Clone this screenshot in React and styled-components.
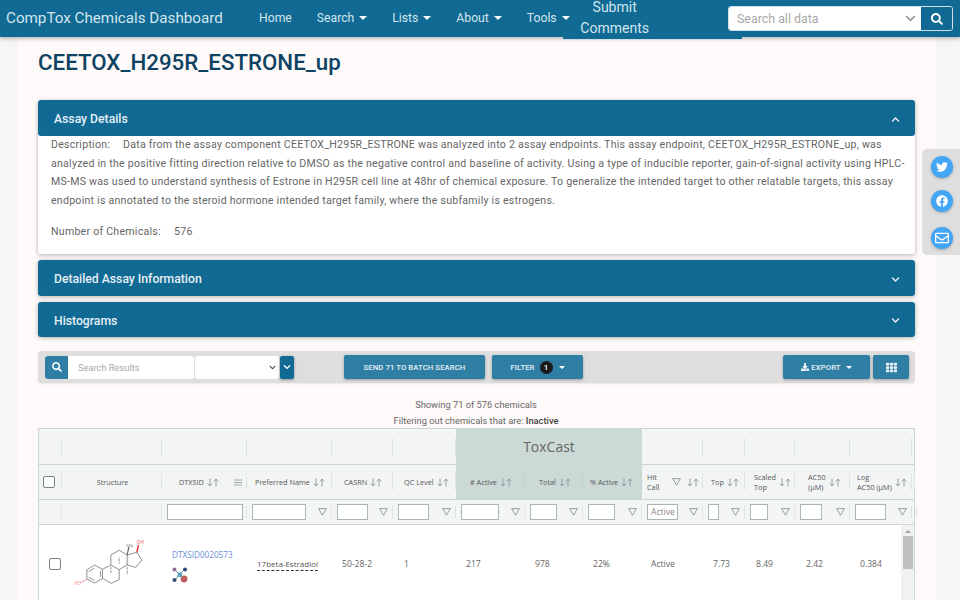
import React from "react";
import styled, { createGlobalStyle } from "styled-components";
import {
  FaSearch,
  FaChevronDown,
  FaChevronUp,
  FaTwitter,
  FaFacebook,
  FaRegEnvelope,
  FaDownload,
  FaTh,
} from "react-icons/fa";

const GlobalStyle = createGlobalStyle`
  html, body {
    margin: 0;
    height: 600px;
    overflow: hidden;
    background: #f5f6f6;
    font-family: Roboto, "Liberation Sans", sans-serif;
  }
  * { box-sizing: border-box; }
`;

const COLUMNS = "23px 100px 85px 85px 61px 63px 69px 58px 59px 61px 42px 50px 55px 62px 1fr";
const BODY_COLUMNS = "23px 100px 85px 85px 61px 63px 69px 58px 59px 61px 42px 50px 55px 1fr";

const Page = styled.div`
  position: relative;
  width: 960px;
  height: 600px;
  overflow: hidden;
`;

const Navbar = styled.header`
  position: relative;
  z-index: 2;
  display: flex;
  align-items: flex-start;
  height: 37px;
  padding: 0 7px 0 6px;
  background: #106a94;
  box-shadow: 0 2px 4px rgba(0, 0, 0, 0.25);
  color: #d3e5ed;
`;

const Brand = styled.div`
  flex: none;
  width: 253px;
  font-size: 15.2px;
  line-height: 37px;
  white-space: nowrap;
`;

const NavLink = styled.div`
  position: relative;
  z-index: 1;
  flex: none;
  display: flex;
  align-items: center;
  gap: 5px;
  margin-right: 25px;
  height: 36px;
  font-size: 12.2px;
  white-space: nowrap;
`;

const Caret = styled.span`
  display: inline-block;
  width: 0;
  height: 0;
  border-left: ${(p) => p.$size || 4}px solid transparent;
  border-right: ${(p) => p.$size || 4}px solid transparent;
  border-top: ${(p) => p.$size || 4}px solid ${(p) => p.$color || "#fff"};
  margin-left: ${(p) => p.$gap || 0}px;
`;

const CommentsBox = styled.div`
  flex: none;
  width: 179px;
  height: 40px;
  margin-left: -32px;
  margin-right: -14px;
  padding-left: 17px;
  background: #106a94;
  border-bottom: 1px solid #cfe0e8;
  font-size: 14px;
`;

const CommentsText = styled.div`
  width: 70px;
  margin-top: -3px;
  text-align: center;
  line-height: 21px;
`;

const SiteSearch = styled.div`
  position: relative;
  display: flex;
  flex: none;
  width: 225px;
  height: 25px;
  margin-top: 6px;
  margin-left: auto;
  border: 1px solid #cfe0e8;
  border-radius: 3px;
  overflow: hidden;
`;

const SiteField = styled.div`
  flex: 1;
  display: flex;
  align-items: center;
  justify-content: space-between;
  padding: 0 5px 0 8px;
  background: #fff;
  color: #a9a9a9;
  font-size: 12.4px;
`;

const SiteButton = styled.div`
  flex: none;
  display: flex;
  align-items: center;
  justify-content: center;
  width: 31px;
  background: #106a94;
  color: #fff;
  font-size: 12px;
`;

const Main = styled.main`
  width: 919px;
  height: 563px;
  margin-left: 17px;
  padding: 0 21px;
  background: #fffafa;
`;

const Title = styled.h1`
  margin: 0;
  height: 63px;
  padding-top: 10px;
  font-size: 22.3px;
  line-height: 30px;
  font-weight: 500;
  color: #0d4263;
`;

const Panel = styled.section`
  margin-bottom: 6px;
  background: #fff;
  border-radius: 3px;
  box-shadow: 0 1px 4px rgba(0, 0, 0, 0.3);
`;

const PanelHead = styled.div`
  display: flex;
  align-items: center;
  justify-content: space-between;
  height: ${(p) => p.$height}px;
  padding: 2px 15px 0 16px;
  background: #106a94;
  border-radius: 3px;
  color: #e6eff4;
  font-size: 12.2px;
  font-weight: 500;
`;

const PanelBody = styled.div`
  height: 118px;
  padding: 0 6px 0 13px;
  color: #666;
  font-size: 10.6px;
  line-height: 18.7px;
  letter-spacing: 0.24px;
`;

const Description = styled.p`
  margin: 0;
`;

const Label = styled.span`
  display: inline-block;
  width: 72px;
`;

const ChemCount = styled.div`
  margin-top: 12px;
`;

const CountLabel = styled.span`
  display: inline-block;
  width: 123px;
`;

const Toolbar = styled.div`
  display: flex;
  align-items: center;
  height: 32px;
  margin-top: 14px;
  padding: 0 6px 0 7px;
  background: #dedede;
  border-radius: 4px;
  box-shadow: 0 1px 2px rgba(0, 0, 0, 0.08);
`;

const SearchIcon = styled.div`
  display: flex;
  align-items: center;
  justify-content: center;
  width: 23px;
  height: 23px;
  background: #2f7fa5;
  border-radius: 3px 0 0 3px;
  color: #fff;
  font-size: 10px;
`;

const ResultSearch = styled.div`
  width: 126px;
  height: 23px;
  padding-left: 10px;
  background: #fff;
  border-radius: 0 3px 3px 0;
  color: #a9a9a9;
  font-size: 9.3px;
  line-height: 23px;
`;

const ResultSelect = styled.div`
  display: flex;
  align-items: center;
  justify-content: flex-end;
  width: 84px;
  height: 23px;
  margin-left: 1px;
  padding-right: 3px;
  background: #fff;
  border-radius: 3px;
  color: #444;
  font-size: 7px;
`;

const SelectButton = styled.div`
  display: flex;
  align-items: center;
  justify-content: center;
  width: 14px;
  height: 23px;
  margin-left: 1px;
  background: #106a94;
  border-radius: 2px;
  color: #fff;
  font-size: 8px;
  box-shadow: 0 1px 3px rgba(0, 0, 0, 0.35);
`;

const ActionButton = styled.div`
  display: flex;
  align-items: center;
  justify-content: center;
  gap: ${(p) => p.$gap || 0}px;
  flex: none;
  width: ${(p) => p.$width}px;
  height: 24px;
  margin-left: ${(p) => p.$left}px;
  background: #2f7fa5;
  border-radius: 2px;
  color: #e8f1f5;
  font-size: 7.7px;
  font-weight: 500;
  letter-spacing: 0.1px;
  box-shadow: 0 1px 3px rgba(0, 0, 0, 0.3);
  white-space: nowrap;
`;

const Badge = styled.span`
  display: flex;
  align-items: center;
  justify-content: center;
  width: 13px;
  height: 13px;
  margin: 0 6px 0 5px;
  background: #1b1b1b;
  border-radius: 50%;
  color: #fff;
  font-size: 8px;
`;

const Summary = styled.div`
  margin-top: 14px;
  padding-right: 1px;
  text-align: center;
  color: #666;
  font-size: 9.3px;
  line-height: 16px;

  b {
    color: #444;
    font-weight: 500;
  }
`;

const Table = styled.div`
  height: 180px;
  margin-top: -1px;
  border: 1px solid #cdd6d6;
  border-bottom: none;
  background: #fff;
  font-family: "Open Sans", "Noto Sans", sans-serif;
`;

const HeadRow = styled.div`
  display: grid;
  grid-template-columns: ${COLUMNS};
  height: ${(p) => p.$height}px;
  background: #f3f5f5;
  border-bottom: 1px solid #cdd6d6;
`;

const GroupCell = styled.div`
  display: flex;
  align-items: center;
  justify-content: center;
  grid-column: ${(p) => (p.$span ? `span ${p.$span}` : "auto")};
  background: ${(p) => (p.$shaded ? "#cbdad7" : "transparent")};
  color: #666;
  font-size: 14px;
  font-weight: 500;

  &::after {
    content: "";
    display: ${(p) => (p.$shaded ? "none" : "block")};
    width: 1px;
    height: 18px;
    margin-left: auto;
    background: #dfe4e4;
  }
`;

const HeadCell = styled.div`
  display: flex;
  align-items: center;
  justify-content: ${(p) => p.$justify || "flex-start"};
  gap: 3px;
  padding: 0 3px 0 ${(p) => p.$pad ?? 4}px;
  background: ${(p) => (p.$shaded ? "#cbdad7" : "transparent")};
  color: #555;
  font-size: 7.3px;
  line-height: 10.5px;
  position: relative;

  &::after {
    content: "";
    position: absolute;
    right: 0;
    top: 8px;
    bottom: 9px;
    width: 1px;
    background: ${(p) => (p.$shaded ? "#c2d2cf" : "#dfe4e4")};
  }
`;

const HeadLabel = styled.span`
  white-space: pre-line;
`;

const HeadIcon = styled.span`
  display: flex;
  margin-left: ${(p) => p.$left || "0"};
  margin-right: ${(p) => p.$right || 0}px;
`;

const FilterCell = styled.div`
  display: flex;
  align-items: center;
  padding: 0 0 0 5px;
  position: relative;

  &::after {
    content: "";
    position: absolute;
    right: 0;
    top: 6px;
    bottom: 6px;
    width: 1px;
    background: #dfe4e4;
  }
`;

const FilterInput = styled.input`
  flex: none;
  width: ${(p) => p.$width}px;
  height: 16px;
  padding: 0 0 0 3px;
  background: #fff;
  border: 1px solid #aab6b6;
  border-radius: 0;
  outline: none;
  font-family: inherit;
  font-size: 8.6px;

  &::placeholder {
    color: #888;
  }
`;

const FilterSlot = styled.div`
  flex: 1;
  display: flex;
  justify-content: flex-end;
  padding-right: 5px;
`;

const Checkbox = styled.span`
  display: block;
  width: 12px;
  height: 12px;
  margin-left: ${(p) => p.$left}px;
  background: #fff;
  border: 1px solid #76838b;
  border-radius: 2px;
`;

const TableBody = styled.div`
  display: flex;
  height: 100px;
`;

const BodyRow = styled.div`
  flex: 1;
  display: grid;
  grid-template-columns: ${BODY_COLUMNS};
  height: 77px;
  align-items: center;
  color: #666;
  font-size: 8.6px;
`;

const BodyCell = styled.div`
  padding-left: ${(p) => p.$pad ?? 10}px;
`;

const StructureCell = styled.div`
  margin-left: 8px;
  line-height: 0;
`;

const IdentityCell = styled.div`
  margin-top: 4px;
`;

const Link = styled.div`
  padding-left: 10px;
  color: #6d8fdc;
  font-size: 8.2px;
`;

const LinkIcon = styled.div`
  margin: 7px 0 0 10px;
  line-height: 0;
`;

const Dashed = styled.span`
  color: #555;
  font-size: 8px;
  border-bottom: 1px dashed #333;
  padding-bottom: 1px;
`;

const Scrollbar = styled.div`
  flex: none;
  display: flex;
  flex-direction: column;
  align-items: center;
  width: 13px;
  height: 76px;
  background: #f1f1f1;
`;

const ScrollUp = styled.span`
  margin: 5px 0 3px;
  width: 0;
  height: 0;
  border-left: 3px solid transparent;
  border-right: 3px solid transparent;
  border-bottom: 3px solid #a3a3a3;
`;

const ScrollThumb = styled.span`
  width: 10px;
  height: 33px;
  background: #c1c1c1;
`;

const SideRail = styled.aside`
  position: absolute;
  top: 149px;
  right: 0;
  display: flex;
  flex-direction: column;
  align-items: center;
  width: 38px;
  height: 106px;
  padding: 7px 0 0 1px;
  background: #dedede;
  border-radius: 5px 0 0 5px;
`;

const ShareButton = styled.div`
  display: flex;
  align-items: center;
  justify-content: center;
  width: 22px;
  height: 22px;
  margin-bottom: ${(p) => p.$gap}px;
  background: #42a5f5;
  border-radius: 50%;
  color: #fff;
  font-size: ${(p) => p.$size || 12}px;
  box-shadow: 0 1px 3px rgba(0, 0, 0, 0.25);
`;

const SortArrows = () => (
  <svg width="12" height="9" viewBox="0 0 12 9" fill="none" stroke="#8d9699" strokeWidth="0.9">
    <path d="M3 0.5V8M0.8 5.6L3 8L5.2 5.6" />
    <path d="M9 8.5V1M6.8 3.4L9 1L11.2 3.4" />
  </svg>
);

const FunnelIcon = () => (
  <svg width="9" height="8" viewBox="0 0 9 8" fill="none" stroke="#7b8a8e" strokeWidth="0.8">
    <path d="M0.6 0.6H8.4L4.5 7.2Z" />
  </svg>
);

const MenuIcon = () => (
  <svg width="8" height="7" viewBox="0 0 8 7" stroke="#a0a8aa" strokeWidth="1">
    <path d="M0 1H8M0 3.5H8M0 6H8" />
  </svg>
);

const Molecule = () => (
  <svg width="77" height="50" viewBox="120 340 230 150" fill="none" stroke="#5a5a5a" strokeWidth="2">
    <path d="M170 433L193 418L217 431L217 458L193 472L170 460Z" />
    <path d="M176 438L193 427M211 436V453M193 464L176 455" />
    <path d="M217 431L242 418L267 432L267 462L243 473L217 458" />
    <path d="M242 418V388L267 374L291 388V418L267 432" />
    <path d="M291 388L320 380L335 403L317 425L291 418" />
    <path d="M291 388L296 364" strokeWidth="3.4" />
    <path d="M242 424V444M267 396V414M291 424V448" strokeDasharray="2 2" strokeWidth="3" />
    <path d="M170 461L152 471" stroke="#e06666" />
    <path d="M320 380L325 358" stroke="#e8262a" strokeWidth="4" />
    <text x="132" y="479" fill="#f08a8a" stroke="none" fontSize="14" fontFamily="Open Sans">HO</text>
    <text x="320" y="356" fill="#e05050" stroke="none" fontSize="14" fontFamily="Open Sans">OH</text>
    <text x="288" y="363" fill="#333" stroke="none" fontSize="12" fontFamily="Open Sans">CH₃</text>
  </svg>
);

const NetworkIcon = () => (
  <svg width="16" height="16" viewBox="0 0 16 16" stroke="#6b7f8c" strokeWidth="1">
    <path d="M3 3L7.5 7.5M12.5 2.5L7.5 7.5M3 13L7.5 7.5M12 12L7.5 7.5" />
    <circle cx="2.5" cy="2.5" r="2" fill="#8a6d94" stroke="none" />
    <circle cx="13" cy="2.5" r="2" fill="#2c4a73" stroke="none" />
    <circle cx="2.5" cy="13" r="2" fill="#2c4a73" stroke="none" />
    <circle cx="12" cy="12" r="3.4" fill="#c25b62" stroke="none" />
    <rect x="5.5" y="5.5" width="4.5" height="4.5" fill="#58a3b8" stroke="none" />
  </svg>
);

const headers = [
  { label: "", pad: 0 },
  { label: "Structure", justify: "center", plain: true },
  { label: "DTXSID", pad: 17, menu: true },
  { label: "Preferred Name", pad: 8 },
  { label: "CASRN", pad: 12 },
  { label: "QC Level", pad: 11 },
  { label: "# Active", pad: 14, shaded: true },
  { label: "Total", pad: 14, shaded: true },
  { label: "% Active", pad: 7, shaded: true },
  { label: "Hit\nCall", pad: 5, funnel: true },
  { label: "Top", pad: 8 },
  { label: "Scaled\nTop", pad: 9 },
  { label: "AC50\n(µM)", pad: 13 },
  { label: "Log\nAC50 (µM)", pad: 7 },
  { label: "", pad: 0 },
];

const filters = [
  {},
  {},
  { width: 76, bare: true },
  { width: 54 },
  { width: 31 },
  { width: 31 },
  { width: 38 },
  { width: 27 },
  { width: 27 },
  { width: 31, placeholder: "Active" },
  { width: 11 },
  { width: 18 },
  { width: 22 },
  { width: 31 },
  {},
];

const values = [
  { text: "50-28-2" },
  { text: "1", pad: 11 },
  { text: "217" },
  { text: "978" },
  { text: "22%" },
  { text: "Active", pad: 9 },
  { text: "7.73" },
  { text: "8.49", pad: 11 },
  { text: "2.42", pad: 11 },
  { text: "0.384" },
];

export default function App() {
  return (
    <Page>
      <GlobalStyle />
      <Navbar>
        <Brand>CompTox Chemicals Dashboard</Brand>
        <NavLink>Home</NavLink>
        <NavLink>Search <Caret /></NavLink>
        <NavLink>Lists <Caret /></NavLink>
        <NavLink>About <Caret /></NavLink>
        <NavLink>Tools <Caret /></NavLink>
        <CommentsBox>
          <CommentsText>Submit Comments</CommentsText>
        </CommentsBox>
        <SiteSearch>
          <SiteField>
            Search all data
            <FaChevronDown color="#999" size={11} />
          </SiteField>
          <SiteButton><FaSearch /></SiteButton>
        </SiteSearch>
      </Navbar>

      <Main>
        <Title>CEETOX_H295R_ESTRONE_up</Title>

        <Panel>
          <PanelHead $height={36}>
            Assay Details
            <FaChevronUp size={9} />
          </PanelHead>
          <PanelBody>
            <Description>
              <Label>Description:</Label>
              Data from the assay component CEETOX_H295R_ESTRONE was analyzed into 2 assay endpoints. This assay endpoint, CEETOX_H295R_ESTRONE_up, was
              analyzed in the positive fitting direction relative to DMSO as the negative control and baseline of activity. Using a type of inducible reporter, gain-of-signal activity using HPLC-MS-MS was used to understand synthesis of Estrone in H295R cell line at 48hr of chemical exposure. To generalize the intended target to other relatable targets, this assay endpoint is annotated to the steroid hormone intended target family, where the subfamily is estrogens.
            </Description>
            <ChemCount>
              <CountLabel>Number of Chemicals:</CountLabel>
              576
            </ChemCount>
          </PanelBody>
        </Panel>

        <Panel>
          <PanelHead $height={36}>
            Detailed Assay Information
            <FaChevronDown size={9} />
          </PanelHead>
        </Panel>

        <Panel>
          <PanelHead $height={35}>
            Histograms
            <FaChevronDown size={9} />
          </PanelHead>
        </Panel>

        <Toolbar>
          <SearchIcon><FaSearch /></SearchIcon>
          <ResultSearch>Search Results</ResultSearch>
          <ResultSelect><FaChevronDown /></ResultSelect>
          <SelectButton><FaChevronDown /></SelectButton>
          <ActionButton $width={141} $left={50}>SEND 71 TO BATCH SEARCH</ActionButton>
          <ActionButton $width={91} $left={7}>
            FILTER <Badge>1</Badge> <Caret $size={3} />
          </ActionButton>
          <ActionButton $width={87} $left={200} $gap={2}>
            <FaDownload size={8} /> EXPORT <Caret $size={3} $gap={3} />
          </ActionButton>
          <ActionButton $width={36} $left={3}><FaTh size={11} /></ActionButton>
        </Toolbar>

        <Summary>
          Showing 71 of 576 chemicals
          <br />
          Filtering out chemicals that are: <b>Inactive</b>
        </Summary>

        <Table>
          <HeadRow $height={36}>
            {Array.from({ length: 6 }, (_, i) => <GroupCell key={i} />)}
            <GroupCell $span={3} $shaded>ToxCast</GroupCell>
            {Array.from({ length: 5 }, (_, i) => <GroupCell key={i} />)}
          </HeadRow>
          <HeadRow $height={35}>
            {headers.map((h, i) => (
              <HeadCell
                key={i}
                $pad={h.pad}
                $justify={h.justify}
                $shaded={h.shaded}
              >
                {i === 0 && <Checkbox $left={4} />}
                <HeadLabel>{h.label}</HeadLabel>
                {h.funnel && <HeadIcon $left="10px" $right={3}><FunnelIcon /></HeadIcon>}
                {h.label && !h.plain && <SortArrows />}
                {h.menu && <HeadIcon $left="auto" $right={2}><MenuIcon /></HeadIcon>}
              </HeadCell>
            ))}
          </HeadRow>
          <HeadRow $height={25}>
            {filters.map((f, i) => (
              <FilterCell key={i}>
                {f.width && <FilterInput $width={f.width} placeholder={f.placeholder} aria-label="Filter" />}
                {f.width && !f.bare && <FilterSlot><FunnelIcon /></FilterSlot>}
              </FilterCell>
            ))}
          </HeadRow>
          <TableBody>
            <BodyRow>
              <Checkbox $left={10} />
              <StructureCell><Molecule /></StructureCell>
              <IdentityCell>
                <Link>DTXSID0020573</Link>
                <LinkIcon><NetworkIcon /></LinkIcon>
              </IdentityCell>
              <BodyCell $pad={10}><Dashed>17beta-Estradiol</Dashed></BodyCell>
              {values.map((v) => (
                <BodyCell key={v.text} $pad={v.pad}>{v.text}</BodyCell>
              ))}
            </BodyRow>
            <Scrollbar>
              <ScrollUp />
              <ScrollThumb />
            </Scrollbar>
          </TableBody>
        </Table>
      </Main>

      <SideRail>
        <ShareButton $gap={12}><FaTwitter /></ShareButton>
        <ShareButton $gap={15}><FaFacebook /></ShareButton>
        <ShareButton $gap={0} $size={14}><FaRegEnvelope /></ShareButton>
      </SideRail>
    </Page>
  );
}
